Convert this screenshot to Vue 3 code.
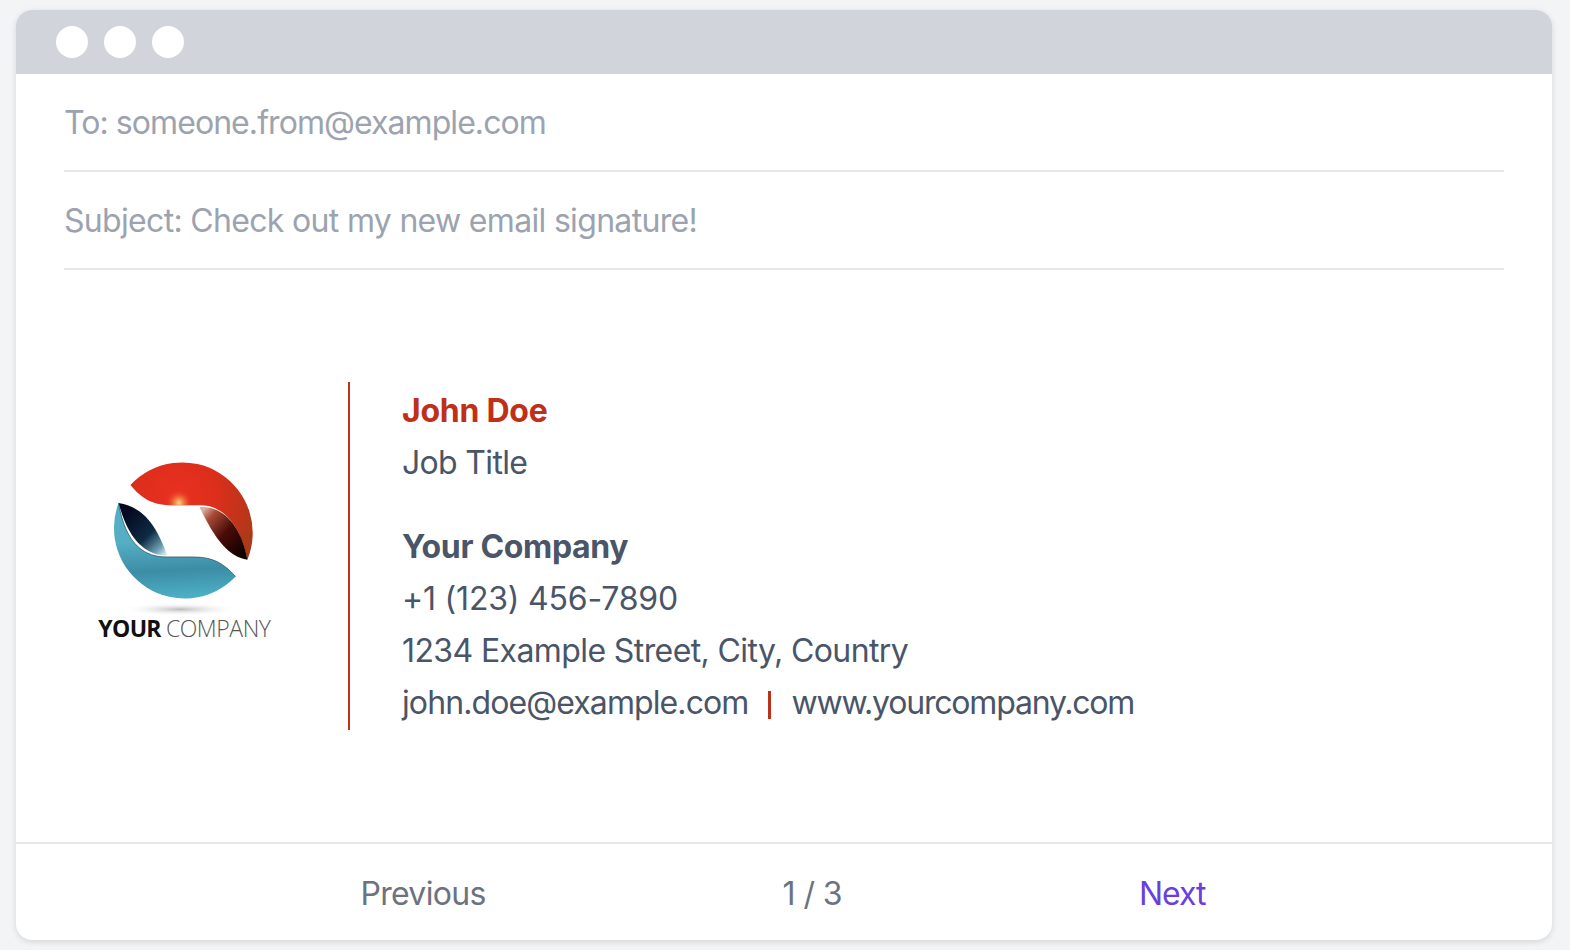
<script setup>
const dots = [1, 2, 3]
</script>

<template>
  <div class="page">
    <div class="card">
      <div class="titlebar">
        <span v-for="d in dots" :key="d" class="dot"></span>
      </div>
      <div class="fields">
        <div class="field ls-to">To: someone.from@example.com</div>
        <div class="field ls-subject">Subject: Check out my new email signature!</div>
      </div>
      <div class="signature">
        <div class="logo-col">
          <svg class="logo" viewBox="0 0 630 630" width="210" height="210">
            <defs>
              <radialGradient id="red" gradientUnits="userSpaceOnUse" cx="290" cy="170" r="260">
                <stop offset="0" stop-color="#ea3020" />
                <stop offset="0.45" stop-color="#dd2e1c" />
                <stop offset="1" stop-color="#a83a18" />
              </radialGradient>
              <radialGradient id="glow" gradientUnits="userSpaceOnUse" cx="297" cy="190" r="40">
                <stop offset="0" stop-color="#f8d28c" />
                <stop offset="0.35" stop-color="#f29a50" stop-opacity="0.75" />
                <stop offset="1" stop-color="#ea3020" stop-opacity="0" />
              </radialGradient>
              <clipPath id="redClip">
                <path d="M153 137 A209 209 0 0 1 500 358 C475 240 420 197 360 197 L280 197 C215 197 185 175 153 137 Z" />
              </clipPath>
              <linearGradient id="leafRed" gradientUnits="userSpaceOnUse" x1="365" y1="215" x2="490" y2="330">
                <stop offset="0" stop-color="#dcae9e" />
                <stop offset="0.18" stop-color="#a84a36" />
                <stop offset="0.55" stop-color="#4a0c08" />
                <stop offset="1" stop-color="#120202" />
              </linearGradient>
              <linearGradient id="teal" gradientUnits="userSpaceOnUse" x1="280" y1="480" x2="270" y2="300">
                <stop offset="0" stop-color="#4fb3c9" />
                <stop offset="0.5" stop-color="#3b8da6" />
                <stop offset="1" stop-color="#55aec3" />
              </linearGradient>
              <linearGradient id="leafBlue" gradientUnits="userSpaceOnUse" x1="140" y1="220" x2="258" y2="340">
                <stop offset="0" stop-color="#04091f" />
                <stop offset="0.55" stop-color="#0d2a44" />
                <stop offset="0.86" stop-color="#6fa2b4" />
                <stop offset="1" stop-color="#d5e6ea" />
              </linearGradient>
              <radialGradient id="shadow" cx="0.5" cy="0.5" r="0.5">
                <stop offset="0" stop-color="#bdbdbd" />
                <stop offset="1" stop-color="#ffffff" stop-opacity="0" />
              </radialGradient>
            </defs>
            <ellipse cx="300" cy="508" rx="180" ry="20" fill="url(#shadow)" />
            <g transform="translate(309 275) scale(1.012) translate(-309 -275)">
              <path d="M153 137 A209 209 0 0 1 500 358 C475 240 420 197 360 197 L280 197 C215 197 185 175 153 137 Z" fill="url(#red)" />
              <circle cx="297" cy="190" r="40" fill="url(#glow)" clip-path="url(#redClip)" />
              <path d="M358 202 C420 197 478 245 500 358 C445 350 405 300 358 202 Z" fill="url(#leafRed)" />
              <path d="M118 190 A209 209 0 0 0 465 408 C430 370 400 350 340 350 L260 350 C200 350 140 320 118 190 Z" fill="url(#teal)" />
              <path d="M118 190 C180 200 225 240 262 346 C205 345 150 310 118 190 Z" fill="url(#leafBlue)" />
              <path d="M118 190 C140 320 200 350 260 350 L340 350 C400 350 430 370 465 408" fill="none" stroke="#1c4a55" stroke-width="2" />
            </g>
            <text class="logo-text" x="55" y="590"><tspan class="logo-bold">YOUR</tspan><tspan class="logo-light" dx="15">COMPANY</tspan></text>
          </svg>
        </div>
        <div class="info">
          <div class="name">John Doe</div>
          <div class="ls-job">Job Title</div>
          <div class="company">Your Company</div>
          <div class="ls-phone">+1 (123) 456-7890</div>
          <div class="ls-street">1234 Example Street, City, Country</div>
          <div class="links">
            <span class="ls-mail">john.doe@example.com</span>
            <span class="sep"></span>
            <span class="ls-web">www.yourcompany.com</span>
          </div>
        </div>
      </div>
      <div class="pager">
        <span class="ls-prev">Previous</span>
        <span class="ls-count">1 / 3</span>
        <span class="next">Next</span>
      </div>
    </div>
  </div>
</template>

<style>
html, body { margin: 0; background: #f3f4f6; }
</style>

<style scoped>
.page {
  width: 1570px;
  height: 950px;
  box-sizing: border-box;
  padding: 10px 18px 10px 16px;
  background: #f3f4f6;
  font-family: Inter, "Liberation Sans", sans-serif;
  font-size: 32px;
  line-height: 52px;
  overflow: hidden;
}
.card {
  height: 930px;
  display: flex;
  flex-direction: column;
  background: #fff;
  border-radius: 16px;
  overflow: hidden;
  box-shadow: 0 2px 6px rgba(0, 0, 0, 0.12);
}
.titlebar {
  height: 64px;
  flex: none;
  display: flex;
  align-items: center;
  gap: 16px;
  padding-left: 40px;
  background: #d1d5db;
}
.dot {
  width: 32px;
  height: 32px;
  border-radius: 50%;
  background: #fff;
}
.fields {
  padding: 0 48px;
}
.field {
  height: 96px;
  line-height: 98px;
  color: #9ca3af;
  border-bottom: 2px solid #e5e7eb;
}
.ls-to { letter-spacing: -0.93px; }
.ls-subject { letter-spacing: -0.68px; }
.ls-job { letter-spacing: -0.67px; }
.ls-phone { letter-spacing: -0.2px; }
.ls-street { letter-spacing: -0.6px; }
.ls-mail { letter-spacing: -0.9px; }
.ls-web { letter-spacing: -1.2px; }
.ls-prev { letter-spacing: -0.7px; }
.ls-count { letter-spacing: -0.6px; }
.signature {
  flex: 1;
  display: flex;
  padding: 112px 48px;
}
.logo-col {
  display: flex;
  align-items: center;
  padding: 0 58px 0 16px;
  border-right: 2px solid #bf3018;
  margin-right: 52px;
}
.logo {
  display: block;
  width: 210px;
  height: 210px;
  margin-bottom: 22px;
}
.logo-text {
  font-family: "Open Sans", "Noto Sans", sans-serif;
  font-size: 69px;
}
.logo-bold {
  font-weight: 700;
  fill: #111;
  letter-spacing: -2px;
}
.logo-light {
  font-weight: 300;
  fill: #555;
  letter-spacing: -1.3px;
}
.info {
  padding-top: 3px;
  color: #4a5568;
}
.name {
  color: #bf3018;
  font-weight: 700;
  letter-spacing: -0.25px;
}
.company {
  margin-top: 32px;
  font-weight: 700;
  letter-spacing: -0.33px;
}
.links {
  display: flex;
  align-items: center;
}
.sep {
  width: 3px;
  height: 28px;
  margin: 4px 20px 0;
  background: #bf3018;
}
.pager {
  height: 93px;
  padding-top: 3px;
  flex: none;
  display: flex;
  align-items: center;
  justify-content: center;
  gap: 297px;
  margin-left: -2px;
  border-top: 2px solid #e5e7eb;
  color: #6b7280;
}
.next {
  color: #6b3fdc;
  letter-spacing: -1px;
}
</style>
